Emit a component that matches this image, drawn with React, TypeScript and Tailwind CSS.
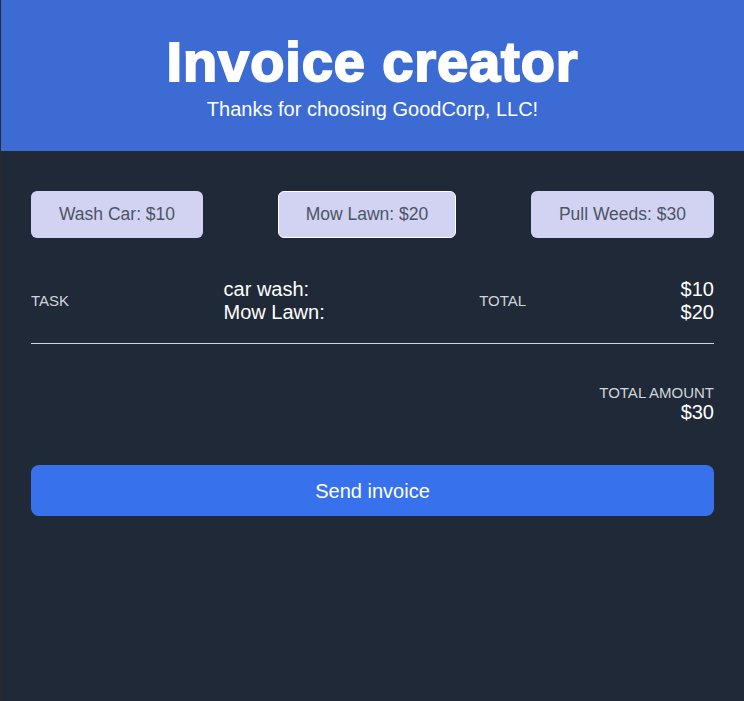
const services = [
  { label: 'Wash Car: $10', selected: false },
  { label: 'Mow Lawn: $20', selected: true },
  { label: 'Pull Weeds: $30', selected: false },
]

const tasks = [
  { name: 'car wash:', price: '$10' },
  { name: 'Mow Lawn:', price: '$20' },
]

export default function App() {
  return (
    <div className="min-h-[701px] bg-[#1f2937] border-l border-[#2b2b2b] font-['Liberation_Sans',Arial,sans-serif]">
      {/* Header */}
      <header className="bg-[#3b6bd3] h-[151px] flex flex-col items-center pt-[28px]">
        <h1 className="text-white text-[56px] font-bold leading-[68px] tracking-[0.9px] [-webkit-text-stroke:2px_white]">
          Invoice creator
        </h1>
        <p className="text-white text-[20px] leading-6 mt-[1px]">Thanks for choosing GoodCorp, LLC!</p>
      </header>

      <main className="px-[30px] pt-10">
        {/* Services */}
        <div className="flex justify-between">
          {services.map((s) => (
            <button
              key={s.label}
              className={`h-[47px] px-[27px] rounded-md bg-[#d2d3f3] text-[#4b5563] text-[17.5px] ${
                s.selected ? 'border border-white' : 'border border-transparent'
              }`}
            >
              {s.label}
            </button>
          ))}
        </div>

        {/* Tasks */}
        <div className="flex justify-between items-center mt-[40px] pb-[19px] border-b border-[#d1d5db]">
          <span className="text-[#d1d5db] text-[15px]">TASK</span>
          <div className="text-white text-[20px] leading-[23px]">
            {tasks.map((t) => (
              <div key={t.name}>{t.name}</div>
            ))}
          </div>
          <span className="text-[#d1d5db] text-[15px]">TOTAL</span>
          <div className="text-white text-[20px] leading-[23px] text-right">
            {tasks.map((t) => (
              <div key={t.name}>{t.price}</div>
            ))}
          </div>
        </div>

        {/* Total */}
        <div className="flex flex-col items-end mt-[41px]">
          <span className="text-[#d1d5db] text-[15px] leading-4">TOTAL AMOUNT</span>
          <span className="text-white text-[20px] leading-[23px]">$30</span>
        </div>

        <button className="mt-[41px] w-full h-[51px] rounded-lg bg-[#3772ec] text-white text-xl">
          Send invoice
        </button>
      </main>
    </div>
  )
}
